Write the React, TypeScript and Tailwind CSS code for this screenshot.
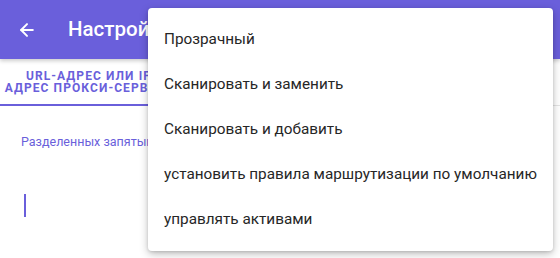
import { ArrowLeft } from "lucide-react";

const MENU_ITEMS = [
  "Прозрачный",
  "Сканировать и заменить",
  "Сканировать и добавить",
  "установить правила маршрутизации по умолчанию",
  "управлять активами",
];

export default function App() {
  return (
    <div
      className="relative w-[560px] h-[258px] overflow-hidden bg-white"
      style={{ fontFamily: "Roboto, 'Noto Sans', sans-serif" }}
    >
      {/* app bar */}
      <header className="h-[59px] bg-[#6a5fdb] flex items-center pl-[17px] shadow-[0_2px_4px_rgba(0,0,0,0.2)]">
        <ArrowLeft className="text-white" size={20} strokeWidth={2.4} />
        <h1 className="ml-[31px] text-white text-[20.5px] font-medium whitespace-nowrap">
          Настройки прокси-сервера
        </h1>
      </header>

      {/* tabs */}
      <div className="flex h-[47px] border-b border-[#e4e4e4]">
        <div className="w-[178px] flex flex-col items-center justify-center relative">
          <span className="text-[#6a5fdb] text-[12px] font-bold tracking-[0.09em] leading-[12px] text-center whitespace-nowrap">
            URL-АДРЕС ИЛИ IP
            <br />
            АДРЕС ПРОКСИ-СЕРВЕРА
          </span>
          <div className="absolute left-0 right-0 bottom-[-1px] h-[2px] bg-[#6a5fdb]" />
        </div>
      </div>

      {/* field */}
      <div className="px-[21px] pt-[27px]">
        <p className="text-[12.5px] text-[#6a5fdb]">Разделенных запятыми</p>
        <div className="mt-[42px] ml-[3px] w-[2px] h-[23px] bg-[#6a5fdb]" />
      </div>

      {/* overflow menu */}
      <div className="absolute left-[148px] top-[8px] w-[405px] py-[9px] bg-white rounded-[4px] shadow-[0_3px_8px_rgba(0,0,0,0.25),0_1px_3px_rgba(0,0,0,0.12)]">
        {MENU_ITEMS.map((item) => (
          <div key={item} className="h-[45px] flex items-center px-[16px] text-[15.3px] text-[#262626] whitespace-nowrap">
            {item}
          </div>
        ))}
      </div>
    </div>
  );
}
